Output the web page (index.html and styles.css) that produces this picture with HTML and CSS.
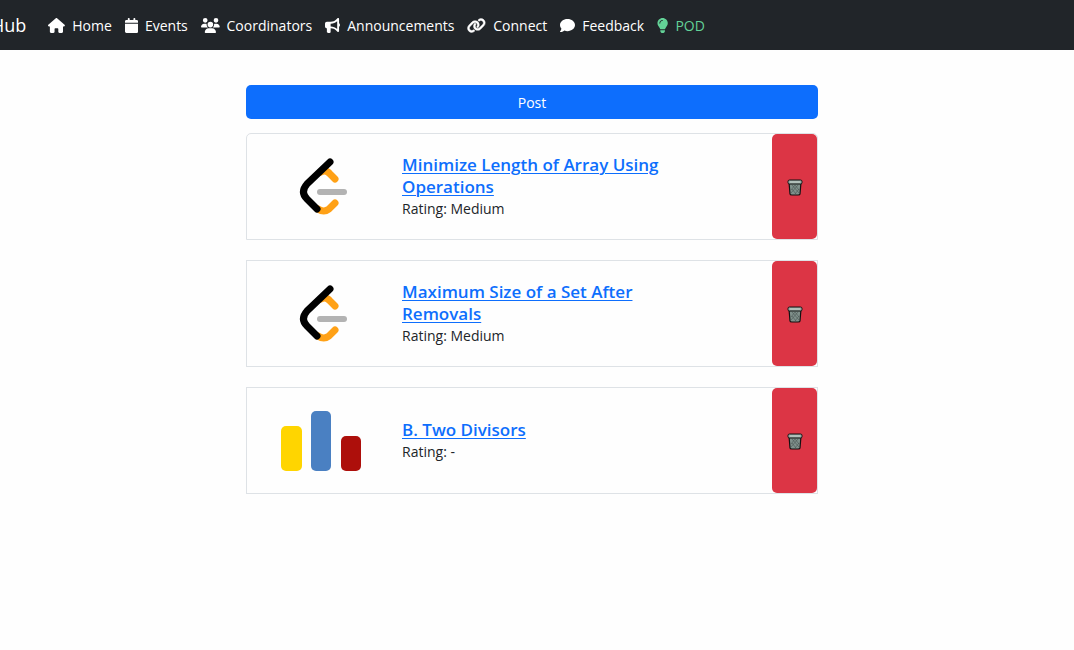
FILE: index.html
```html
<!DOCTYPE html>
<html lang="en">
<head>
<meta charset="utf-8">
<meta name="viewport" content="width=device-width, initial-scale=1">
<title>POD</title>
<link rel="stylesheet" href="styles.css">
</head>
<body>
<svg class="sprite" aria-hidden="true">
  <symbol id="leetcode" viewBox="0 0 80 80">
    <g fill="none" stroke-width="7" stroke-linecap="round">
      <path stroke="#ffa116" d="M40 25Q45 22 49 27L54 32M37 62Q43 66 48 62L54 56"/>
      <path stroke="#b3b3b3" stroke-width="6" d="M39 45H63"/>
      <path stroke="#000" d="M49 15L26 37Q19 45 26 52L36 62"/>
    </g>
  </symbol>
  <symbol id="codeforces" viewBox="0 0 80 80">
    <rect x="0" y="25" width="21" height="45" rx="5" fill="#ffd500"/>
    <rect x="30" y="10" width="20" height="60" rx="5" fill="#4a80c2"/>
    <rect x="60" y="35" width="20" height="35" rx="5" fill="#ad0f0b"/>
  </symbol>
  <symbol id="trash" viewBox="0 0 16 18">
    <path d="M2 4L3 16Q3 17 5 17H11Q13 17 13 16L14 4Z" fill="#7f908b" stroke="#111" stroke-width="1.2"/>
    <path d="M5 7l7 8M5 11l4 5M8 7l4 5M11 7l-7 8M12 11l-4 5M8 7l-4 5" stroke="#4c5654" stroke-width=".6"/>
    <rect x="1" y="2" width="14" height="4" rx="1.5" fill="#98aaa4" stroke="#111" stroke-width="1"/>
    <path d="M3 4H13" stroke="#cbd5d0"/>
  </symbol>
</svg>
<header class="navbar">
  <a class="brand" href="#">Hub</a>
  <nav class="links">
    <a class="link" href="#"><svg class="icon" viewBox="0 0 576 512"><path d="M575.8 255.5c0 18-15 32.1-32 32.1h-32l.7 160.2c0 2.7-.2 5.4-.5 8.1V472c0 22.1-17.9 40-40 40H456c-1.1 0-2.2 0-3.3-.1c-1.4 .1-2.8 .1-4.2 .1H416 392c-22.1 0-40-17.9-40-40V448 384c0-17.7-14.3-32-32-32H256c-17.7 0-32 14.3-32 32v64 24c0 22.1-17.9 40-40 40H160 128.1c-1.5 0-3-.1-4.5-.2c-1.2 .1-2.4 .2-3.6 .2H104c-22.1 0-40-17.9-40-40V360c0-.9 0-1.9 .1-2.8V287.6H32c-18 0-32-14-32-32.1c0-9 3-17 10-24L266.4 8c7-7 15-8 22-8s15 2 21 7L564.8 231.5c8 7 12 15 11 24z"/></svg>Home</a>
    <a class="link" href="#"><svg class="icon" viewBox="0 0 448 512"><path d="M96 32V64H48C21.5 64 0 85.5 0 112v48H448V112c0-26.5-21.5-48-48-48H352V32c0-17.7-14.3-32-32-32s-32 14.3-32 32V64H160V32c0-17.7-14.3-32-32-32S96 14.3 96 32zM448 192H0V464c0 26.5 21.5 48 48 48H400c26.5 0 48-21.5 48-48V192z"/></svg>Events</a>
    <a class="link" href="#"><svg class="icon" viewBox="0 0 640 512"><path d="M144 0a80 80 0 1 1 0 160A80 80 0 1 1 144 0zM512 0a80 80 0 1 1 0 160A80 80 0 1 1 512 0zM0 298.7C0 239.8 47.8 192 106.7 192h42.7c15.9 0 31 3.5 44.6 9.7c-1.3 7.2-1.9 14.7-1.9 22.3c0 38.2 16.8 72.5 43.3 96c-.2 0-.4 0-.7 0H21.3C9.6 320 0 310.4 0 298.7zM405.3 320c-.2 0-.4 0-.7 0c26.6-23.5 43.3-57.8 43.3-96c0-7.6-.7-15-1.9-22.3c13.6-6.3 28.7-9.7 44.6-9.7h42.7C592.2 192 640 239.8 640 298.7c0 11.8-9.6 21.3-21.3 21.3H405.3zM224 224a96 96 0 1 1 192 0 96 96 0 1 1 -192 0zM128 485.3C128 411.7 187.7 352 261.3 352H378.7C452.3 352 512 411.7 512 485.3c0 14.7-11.9 26.7-26.7 26.7H154.7c-14.7 0-26.7-11.9-26.7-26.7z"/></svg>Coordinators</a>
    <a class="link" href="#"><svg class="icon" viewBox="0 0 512 512"><path d="M480 32c0-12.9-7.8-24.6-19.8-29.6s-25.7-2.2-34.9 6.9L381.7 53c-48 48-113.1 75-181 75H192 160 64c-35.3 0-64 28.7-64 64v96c0 35.3 28.7 64 64 64l0 128c0 17.7 14.3 32 32 32h64c17.7 0 32-14.3 32-32V352l8.7 0c67.9 0 133 27 181 75l43.6 43.6c9.2 9.2 22.9 11.9 34.9 6.9s19.8-16.6 19.8-29.6V300.4c18.6-8.8 32-32.5 32-60.4s-13.4-51.6-32-60.4V32zm-64 76.7V240 371.3C357.2 317.8 280.5 288 200.7 288H192V192h8.7c79.8 0 156.5-29.8 215.3-83.3z"/></svg>Announcements</a>
    <a class="link" href="#"><svg class="icon" viewBox="0 0 640 512"><path stroke="currentColor" stroke-width="16" d="M579.8 267.7c56.5-56.5 56.5-148 0-204.5c-50-50-128.8-56.5-186.3-15.4l-1.6 1.1c-14.4 10.3-17.7 30.3-7.4 44.6s30.3 17.7 44.6 7.4l1.6-1.1c32.1-22.9 76-19.3 103.8 8.6c31.5 31.5 31.5 82.5 0 114L422.3 334.8c-31.5 31.5-82.5 31.5-114 0c-27.9-27.9-31.5-71.8-8.6-103.8l1.1-1.6c10.3-14.4 6.9-34.4-7.4-44.6s-34.4-6.9-44.6 7.4l-1.1 1.6C206.5 251.2 213 330 263 380c56.5 56.5 148 56.5 204.5 0L579.8 267.7zM60.2 244.3c-56.5 56.5-56.5 148 0 204.5c50 50 128.8 56.5 186.3 15.4l1.6-1.1c14.4-10.3 17.7-30.3 7.4-44.6s-30.3-17.7-44.6-7.4l-1.6 1.1c-32.1 22.9-76 19.3-103.8-8.6C74 372 74 321 105.5 289.5L217.7 177.2c31.5-31.5 82.5-31.5 114 0c27.9 27.9 31.5 71.8 8.6 103.9l-1.1 1.6c-10.3 14.4-6.9 34.4 7.4 44.6s34.4 6.9 44.6-7.4l1.1-1.6C433.5 260.8 427 182 377 132c-56.5-56.5-148-56.5-204.5 0L60.2 244.3z"/></svg>Connect</a>
    <a class="link" href="#"><svg class="icon" viewBox="0 0 512 512"><path d="M512 240c0 114.9-114.6 208-256 208c-37.1 0-72.3-6.4-104.1-17.9c-11.9 8.7-31.3 20.6-54.3 30.6C73.6 471.1 44.7 480 16 480c-6.5 0-12.3-3.9-14.8-9.9s-1.1-12.8 3.4-17.4l.3-.3c.3-.3 .7-.7 1.3-1.4c1.1-1.2 2.8-3.1 4.9-5.7c4.1-5 9.6-12.4 15.2-21.6c10-16.6 19.5-38.4 21.4-62.9C17.7 326.8 0 285.1 0 240C0 125.1 114.6 32 256 32s256 93.1 256 208z"/></svg>Feedback</a>
    <a class="link active" href="#" aria-current="page"><svg class="icon" viewBox="0 0 384 512"><path d="M272 384c9.6-31.9 29.5-59.1 49.2-86.2c5.2-7.1 10.4-14.2 15.4-21.4c19.8-28.5 31.4-63 31.4-100.3C368 78.8 289.2 0 192 0S16 78.8 16 176c0 37.3 11.6 71.9 31.4 100.3c5 7.2 10.2 14.3 15.4 21.4c19.8 27.1 39.7 54.4 49.2 86.2H272zM192 512c44.2 0 80-35.8 80-80V416H112v16c0 44.2 35.8 80 80 80zM112 176c0 8.8-7.2 16-16 16s-16-7.2-16-16c0-61.9 50.1-112 112-112c8.8 0 16 7.2 16 16s-7.2 16-16 16c-44.2 0-80 35.8-80 80z"/></svg>POD</a>
  </nav>
</header>
<main class="page">
  <button class="post" type="button">Post</button>
  <ul class="problems">
    <li class="card">
      <svg class="logo" role="img" aria-label="LeetCode"><use href="#leetcode"/></svg>
      <div class="info">
        <h2 class="title"><a href="#">Minimize Length of Array Using Operations</a></h2>
        <p class="rating">Rating: Medium</p>
      </div>
      <button class="delete" type="button" aria-label="Delete"><svg class="trash"><use href="#trash"/></svg></button>
    </li>
    <li class="card">
      <svg class="logo" role="img" aria-label="LeetCode"><use href="#leetcode"/></svg>
      <div class="info">
        <h2 class="title"><a href="#">Maximum Size of a Set After Removals</a></h2>
        <p class="rating">Rating: Medium</p>
      </div>
      <button class="delete" type="button" aria-label="Delete"><svg class="trash"><use href="#trash"/></svg></button>
    </li>
    <li class="card">
      <svg class="logo" role="img" aria-label="Codeforces"><use href="#codeforces"/></svg>
      <div class="info">
        <h2 class="title"><a href="#">B. Two Divisors</a></h2>
        <p class="rating">Rating: -</p>
      </div>
      <button class="delete" type="button" aria-label="Delete"><svg class="trash"><use href="#trash"/></svg></button>
    </li>
  </ul>
</main>
</body>
</html>
```
FILE: styles.css
```css
* { box-sizing: border-box; }
body {
  margin: 0;
  background: #fefefe;
  color: #212529;
  font: 14px/21px "Open Sans", "Noto Sans", sans-serif;
  overflow-x: hidden;
}
.sprite { display: none; }
.navbar {
  display: flex;
  align-items: center;
  gap: 22px;
  min-height: 50px;
  background: #212529;
}
.brand {
  margin-left: -9px;
  color: #fff;
  font-size: 18px;
  text-decoration: none;
}
.links { display: flex; gap: 13px; }
.link {
  display: flex;
  align-items: center;
  gap: 7px;
  color: #fff;
  text-decoration: none;
}
.link.active { color: #63d297; }
.icon { height: 15px; fill: currentColor; }
.page {
  max-width: 582px;
  margin: 0 auto;
  padding: 35px 10px 35px 0;
}
.post {
  display: block;
  width: 100%;
  height: 34px;
  border: 0;
  border-radius: 5px;
  background: #0d6efd;
  color: #fff;
  font: inherit;
}
.problems {
  display: grid;
  gap: 20px;
  margin: 14px 0 0;
  padding: 0;
  list-style: none;
}
.card {
  display: flex;
  align-items: center;
  min-height: 107px;
  padding-left: 34px;
  border: 1px solid #dee2e6;
}
.card:first-child { border-radius: 5px 5px 0 0; }
.logo { flex: none; width: 80px; height: 80px; }
.info {
  flex: 1;
  padding: 0 90px 0 41px;
}
.title {
  margin: 0;
  font-size: 17px;
  line-height: 22px;
  font-weight: 600;
}
.title a { color: #0d6efd; text-decoration-thickness: 1px; text-underline-offset: 2px; }
.rating { margin: 0; }
.delete {
  display: flex;
  align-items: center;
  justify-content: center;
  align-self: stretch;
  width: 45px;
  padding: 0;
  border: 0;
  border-radius: 5px;
  background: #dc3545;
}
.trash { width: 16px; height: 18px; }
```
